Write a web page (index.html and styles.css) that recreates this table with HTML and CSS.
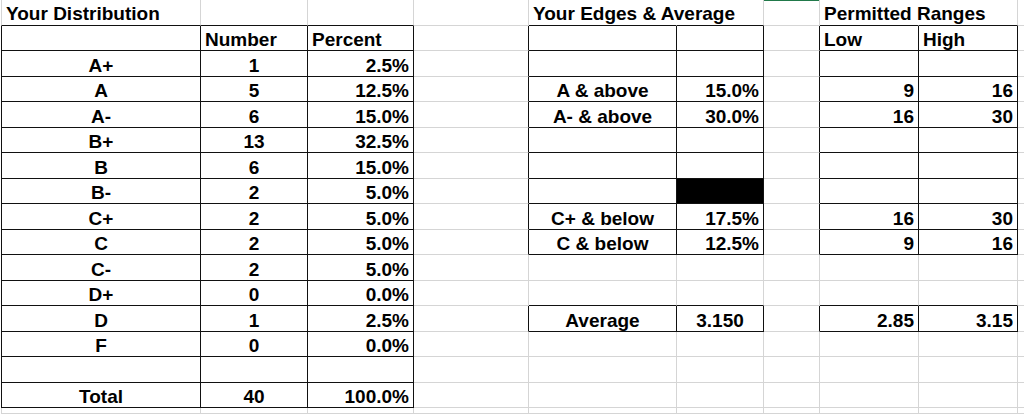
FILE: index.html
```html
<!DOCTYPE html>
<html lang="en">
<head>
<meta charset="utf-8">
<title>Grade Distribution</title>
<link rel="stylesheet" href="styles.css">
</head>
<body>
<div class="sheet">
  <!-- row 1 -->
  <div class="c eb">Your Distribution</div>
  <div class="c eb"></div>
  <div class="c eb"></div>
  <div class="c"></div>
  <div class="c eb spill">Your Edges &amp; Average</div>
  <div class="c eb"></div>
  <div class="c sel"></div>
  <div class="c eb spill">Permitted Ranges</div>
  <div class="c eb"></div>
  <div class="c"></div>
  <!-- row 2 -->
  <div class="c t el"></div>
  <div class="c t">Number</div>
  <div class="c t">Percent</div>
  <div class="c er"></div>
  <div class="c t"></div>
  <div class="c t"></div>
  <div class="c er"></div>
  <div class="c t">Low</div>
  <div class="c t">High</div>
  <div class="c"></div>
  <!-- row 3 -->
  <div class="c t el ctr">A+</div>
  <div class="c t ctr">1</div>
  <div class="c t rt">2.5%</div>
  <div class="c er"></div>
  <div class="c t"></div>
  <div class="c t"></div>
  <div class="c er"></div>
  <div class="c t"></div>
  <div class="c t"></div>
  <div class="c"></div>
  <!-- row 4 -->
  <div class="c t el ctr">A</div>
  <div class="c t ctr">5</div>
  <div class="c t rt">12.5%</div>
  <div class="c er"></div>
  <div class="c t ctr">A &amp; above</div>
  <div class="c t rt">15.0%</div>
  <div class="c er"></div>
  <div class="c t rt">9</div>
  <div class="c t rt">16</div>
  <div class="c"></div>
  <!-- row 5 -->
  <div class="c t el ctr">A-</div>
  <div class="c t ctr">6</div>
  <div class="c t rt">15.0%</div>
  <div class="c er"></div>
  <div class="c t ctr">A- &amp; above</div>
  <div class="c t rt">30.0%</div>
  <div class="c er"></div>
  <div class="c t rt">16</div>
  <div class="c t rt">30</div>
  <div class="c"></div>
  <!-- row 6 -->
  <div class="c t el ctr">B+</div>
  <div class="c t ctr">13</div>
  <div class="c t rt">32.5%</div>
  <div class="c er"></div>
  <div class="c t"></div>
  <div class="c t"></div>
  <div class="c er"></div>
  <div class="c t"></div>
  <div class="c t"></div>
  <div class="c"></div>
  <!-- row 7 -->
  <div class="c t el ctr">B</div>
  <div class="c t ctr">6</div>
  <div class="c t rt">15.0%</div>
  <div class="c er"></div>
  <div class="c t"></div>
  <div class="c t"></div>
  <div class="c er"></div>
  <div class="c t"></div>
  <div class="c t"></div>
  <div class="c"></div>
  <!-- row 8 -->
  <div class="c t el ctr">B-</div>
  <div class="c t ctr">2</div>
  <div class="c t rt">5.0%</div>
  <div class="c er"></div>
  <div class="c t"></div>
  <div class="c t fill"></div>
  <div class="c er"></div>
  <div class="c t"></div>
  <div class="c t"></div>
  <div class="c"></div>
  <!-- row 9 -->
  <div class="c t el ctr">C+</div>
  <div class="c t ctr">2</div>
  <div class="c t rt">5.0%</div>
  <div class="c er"></div>
  <div class="c t ctr">C+ &amp; below</div>
  <div class="c t rt">17.5%</div>
  <div class="c er"></div>
  <div class="c t rt">16</div>
  <div class="c t rt">30</div>
  <div class="c"></div>
  <!-- row 10 -->
  <div class="c t el ctr">C</div>
  <div class="c t ctr">2</div>
  <div class="c t rt">5.0%</div>
  <div class="c er"></div>
  <div class="c t ctr">C &amp; below</div>
  <div class="c t rt">12.5%</div>
  <div class="c er"></div>
  <div class="c t rt">9</div>
  <div class="c t rt">16</div>
  <div class="c"></div>
  <!-- row 11 -->
  <div class="c t el ctr">C-</div>
  <div class="c t ctr">2</div>
  <div class="c t rt">5.0%</div>
  <div class="c"></div>
  <div class="c"></div>
  <div class="c"></div>
  <div class="c"></div>
  <div class="c"></div>
  <div class="c"></div>
  <div class="c"></div>
  <!-- row 12 -->
  <div class="c t el ctr">D+</div>
  <div class="c t ctr">0</div>
  <div class="c t rt">0.0%</div>
  <div class="c"></div>
  <div class="c eb"></div>
  <div class="c eb"></div>
  <div class="c"></div>
  <div class="c eb"></div>
  <div class="c eb"></div>
  <div class="c"></div>
  <!-- row 13 -->
  <div class="c t el ctr">D</div>
  <div class="c t ctr">1</div>
  <div class="c t rt">2.5%</div>
  <div class="c er"></div>
  <div class="c t ctr">Average</div>
  <div class="c t ctr">3.150</div>
  <div class="c er"></div>
  <div class="c t rt">2.85</div>
  <div class="c t rt">3.15</div>
  <div class="c"></div>
  <!-- row 14 -->
  <div class="c t el ctr">F</div>
  <div class="c t ctr">0</div>
  <div class="c t rt">0.0%</div>
  <div class="c"></div>
  <div class="c"></div>
  <div class="c"></div>
  <div class="c"></div>
  <div class="c"></div>
  <div class="c"></div>
  <div class="c"></div>
  <!-- row 15 -->
  <div class="c t el"></div>
  <div class="c t"></div>
  <div class="c t"></div>
  <div class="c"></div>
  <div class="c"></div>
  <div class="c"></div>
  <div class="c"></div>
  <div class="c"></div>
  <div class="c"></div>
  <div class="c"></div>
  <!-- row 16 -->
  <div class="c t el ctr">Total</div>
  <div class="c t ctr">40</div>
  <div class="c t rt">100.0%</div>
  <div class="c"></div>
  <div class="c"></div>
  <div class="c"></div>
  <div class="c"></div>
  <div class="c"></div>
  <div class="c"></div>
  <div class="c"></div>
  <!-- row 17 -->
  <div class="c"></div>
  <div class="c"></div>
  <div class="c"></div>
  <div class="c"></div>
  <div class="c"></div>
  <div class="c"></div>
  <div class="c"></div>
  <div class="c"></div>
  <div class="c"></div>
  <div class="c"></div>
</div>
</body>
</html>
```

FILE: styles.css
```css
html, body {
  margin: 0;
  padding: 0;
  background: #ffffff;
  overflow: hidden;
}

body {
  width: 1024px;
  height: 414px;
  font-family: "Liberation Sans", Arial, sans-serif;
  font-weight: bold;
  font-size: 19px;
  color: #000000;
}

.sheet {
  display: grid;
  margin-left: 1px;
  width: 1023px;
  grid-template-columns: 200px 107px 106px 115px 148px 87px 56px 99px 99px 6px;
  grid-template-rows: 26px repeat(15, 25.47px) 5.9px;
}

.c {
  box-sizing: border-box;
  display: flex;
  align-items: flex-end;
  justify-content: flex-start;
  padding: 0 4px 1px 4px;
  line-height: 1;
  white-space: nowrap;
  overflow: hidden;
  border-right: 1px solid #d5d5d5;
  border-bottom: 1px solid #d5d5d5;
}

.c:nth-child(10n + 1) {
  border-left: 1px solid #d5d5d5;
}

.c:nth-child(-n + 10) {
  padding-bottom: 2px;
}

.c:nth-child(10n) {
  padding: 0;
  border-right: none;
}

.c.spill {
  overflow: visible;
  border-right-color: #ffffff;
  padding-right: 0;
}

.t {
  border-right-color: #111111;
  border-bottom-color: #111111;
}

.c.el {
  border-left-color: #111111;
}

.eb {
  border-bottom-color: #111111;
}

.er {
  border-right-color: #111111;
}

.ctr {
  justify-content: center;
}

.rt {
  justify-content: flex-end;
}

.fill {
  background: #000000;
}

.sel {
  box-shadow: inset 0 1px 0 #21794a;
}
```
